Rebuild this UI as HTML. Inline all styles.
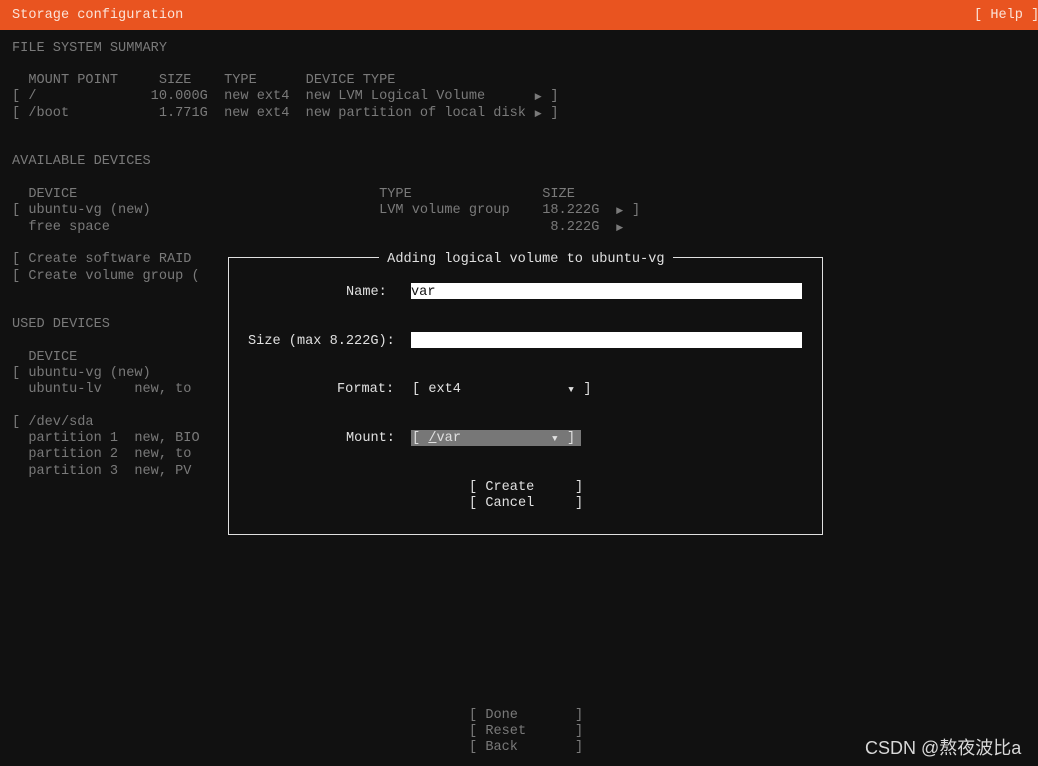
<!DOCTYPE html>
<html><head><meta charset="utf-8"><style>
html,body{margin:0;padding:0;background:#111;width:1038px;height:766px;overflow:hidden;position:relative}
.t{position:absolute;white-space:pre;font:13.6px/16px "Liberation Mono",monospace;color:#7a7a7a;letter-spacing:0}
.w{color:#e0e0e0}
.a{display:inline-block;width:8.16px;font-size:9px;text-align:center;vertical-align:top;line-height:16px}
#hdr{position:absolute;left:0;top:0;width:1038px;height:30px;background:#e95420}
#dlg{position:absolute;left:228px;top:257px;width:593px;height:276px;border:1px solid #e0e0e0;background:#111}
.f{position:absolute;background:#fff}
</style></head><body>
<div id="hdr"></div>
<div class="t" style="left:12px;top:8px;color:#fbe3d8">Storage configuration</div>
<div class="t" style="left:974px;top:8px;color:#fbe3d8">[ Help ]</div>

<div class="t" style="left:12px;top:41px">FILE SYSTEM SUMMARY</div>
<div class="t" style="left:12px;top:73px">  MOUNT POINT     SIZE    TYPE      DEVICE TYPE</div>
<div class="t" style="left:12px;top:89px">[ /              10.000G  new ext4  new LVM Logical Volume      <span class="a">▶</span> ]</div>
<div class="t" style="left:12px;top:106px">[ /boot           1.771G  new ext4  new partition of local disk <span class="a">▶</span> ]</div>

<div class="t" style="left:12px;top:154px">AVAILABLE DEVICES</div>
<div class="t" style="left:12px;top:187px">  DEVICE                                     TYPE                SIZE</div>
<div class="t" style="left:12px;top:203px">[ ubuntu-vg (new)                            LVM volume group    18.222G  <span class="a">▶</span> ]</div>
<div class="t" style="left:12px;top:220px">  free space                                                      8.222G  <span class="a">▶</span></div>
<div class="t" style="left:12px;top:252px">[ Create software RAID</div>
<div class="t" style="left:12px;top:269px">[ Create volume group (</div>

<div class="t" style="left:12px;top:317px">USED DEVICES</div>
<div class="t" style="left:12px;top:350px">  DEVICE</div>
<div class="t" style="left:12px;top:366px">[ ubuntu-vg (new)</div>
<div class="t" style="left:12px;top:382px">  ubuntu-lv    new, to</div>
<div class="t" style="left:12px;top:415px">[ /dev/sda</div>
<div class="t" style="left:12px;top:431px">  partition 1  new, BIO</div>
<div class="t" style="left:12px;top:447px">  partition 2  new, to</div>
<div class="t" style="left:12px;top:464px">  partition 3  new, PV</div>

<div id="dlg"></div>
<div class="t w" style="left:379px;top:252px;background:#111"> Adding logical volume to ubuntu-vg </div>
<div class="t w" style="left:346px;top:285px">Name:</div>
<div class="f" style="left:411px;top:283px;width:391px;height:16px"></div>
<div class="t" style="left:411px;top:285px;color:#111">var</div>
<div class="t w" style="left:248px;top:334px">Size (max 8.222G):</div>
<div class="f" style="left:411px;top:332px;width:391px;height:16px"></div>
<div class="t w" style="left:337px;top:382px">Format:</div>
<div class="t w" style="left:412px;top:382px">[ ext4             <span class="a">▼</span> ]</div>
<div class="t w" style="left:346px;top:431px">Mount:</div>
<div class="f" style="left:411px;top:430px;width:170px;height:16px;background:#777"></div>
<div class="t w" style="left:412px;top:431px">[ <u>/</u>var           <span class="a">▼</span> ]</div>
<div class="t w" style="left:469px;top:480px">[ Create     ]</div>
<div class="t w" style="left:469px;top:496px">[ Cancel     ]</div>

<div class="t" style="left:469px;top:708px">[ Done       ]</div>
<div class="t" style="left:469px;top:724px">[ Reset      ]</div>
<div class="t" style="left:469px;top:740px">[ Back       ]</div>

<div style="position:absolute;left:865px;top:734px;font:18px 'Liberation Sans','Noto Sans CJK SC',sans-serif;color:#d8d8d8;white-space:nowrap">CSDN @熬夜波比a</div>
</body></html>
